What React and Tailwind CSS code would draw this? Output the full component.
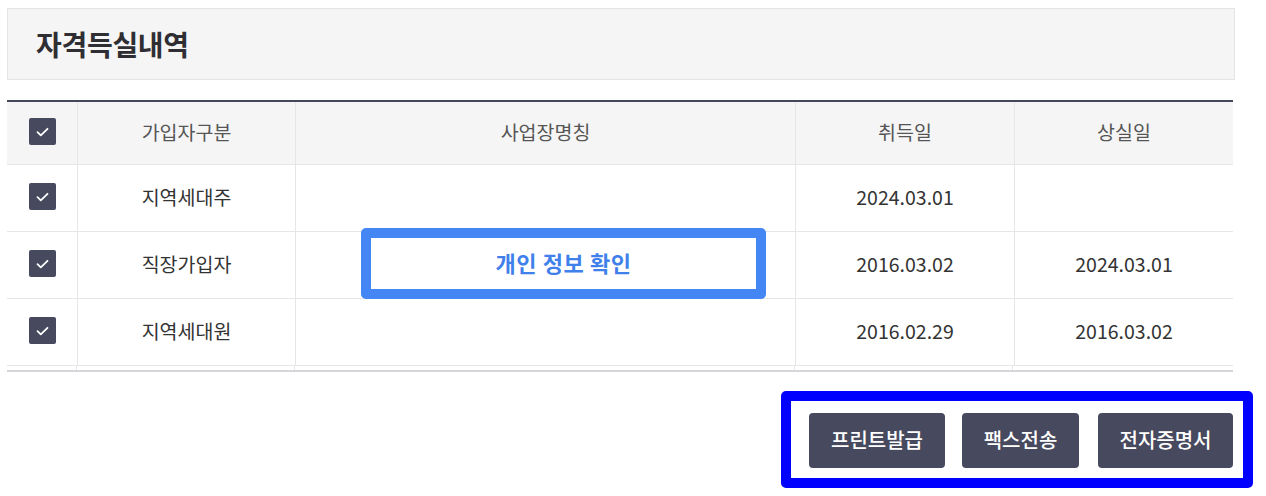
const font = { fontFamily: '"Noto Sans CJK KR", "Noto Sans", sans-serif' }

const cols = 'grid grid-cols-[71px_218px_500px_219px_218px]'

const rows = [
  { type: '지역세대주', name: '', start: '2024.03.01', end: '' },
  { type: '직장가입자', name: '', start: '2016.03.02', end: '2024.03.01' },
  { type: '지역세대원', name: '', start: '2016.02.29', end: '2016.03.02' },
]

function Check() {
  return (
    <span className="flex h-[27px] w-[27px] items-center justify-center rounded-[2px] bg-[#474a5e]">
      <svg width="13" height="10" viewBox="0 0 13 10" fill="none">
        <path d="M1.5 5.2 4.8 8.3 11.5 1.8" stroke="#fff" strokeWidth="1.8" strokeLinecap="round" strokeLinejoin="round" />
      </svg>
    </span>
  )
}

function Cell({ children, last }) {
  return (
    <div className={`flex items-center justify-center pb-[3px] ${last ? '' : 'border-r border-[#e6e6e6]'}`}>
      {children}
    </div>
  )
}

export default function App() {
  return (
    <div className="h-[496px] w-[1266px] bg-white pl-[7px] pt-[8px]" style={font}>
      {/* title */}
      <div className="flex h-[72px] w-[1228px] items-center border border-[#e4e4e4] bg-[#f5f5f5] pl-[28px]">
        <h2 className="text-[28px] font-bold tracking-[-0.3px] text-[#2e2e33]">자격득실내역</h2>
      </div>

      {/* table */}
      <div className="relative mt-[20px] w-[1228px]">
        <div className="w-[1226px] border-t-2 border-[#45475a]">
          <div className={`${cols} h-[63px] border-b border-[#e6e6e6] bg-[#f5f5f5] text-[19.5px] text-[#555]`}>
            <Cell><Check /></Cell>
            <Cell>가입자구분</Cell>
            <Cell>사업장명칭</Cell>
            <Cell>취득일</Cell>
            <Cell last>상실일</Cell>
          </div>
          {rows.map((r, i) => (
            <div key={i} className={`${cols} h-[67px] border-b border-[#e6e6e6] text-[19.5px] text-[#333]`}>
              <Cell><Check /></Cell>
              <Cell>{r.type}</Cell>
              <Cell>{r.name}</Cell>
              <Cell>{r.start}</Cell>
              <Cell last>{r.end}</Cell>
            </div>
          ))}
          <div className="grid h-[6px] grid-cols-[70px_218px_500px_218px_220px] border-b-2 border-[#d4d6da]">
            <div className="border-r border-[#e6e6e6]" />
            <div className="border-r border-[#e6e6e6]" />
            <div className="border-r border-[#e6e6e6]" />
            <div className="border-r border-[#e6e6e6]" />
            <div />
          </div>
        </div>

        {/* overlay */}
        <div className="absolute left-[354px] top-[128px] flex h-[71px] w-[405px] items-center justify-center rounded-[5px] border-[10px] border-[#4487f4] bg-white">
          <span className="pb-[2px] text-[22px] font-bold tracking-[0.6px] text-[#3f80ea]">개인 정보 확인</span>
        </div>
      </div>

      {/* actions */}
      <div className="mt-[41px] flex w-[1226px] justify-end">
        <div className="relative flex gap-[17px]">
          <div className="absolute -bottom-[20px] -left-[28px] -right-[20px] -top-[22px] rounded-[5px] border-[10px] border-[#0000ff]" />
          <button className="relative h-[55px] w-[136px] rounded-[4px] bg-[#474a5e] pb-[2px] text-[20px] font-medium text-white">프린트발급</button>
          <button className="relative h-[55px] w-[117px] rounded-[4px] bg-[#474a5e] pb-[2px] text-[20px] font-medium text-white">팩스전송</button>
          <button className="relative ml-[2px] h-[55px] w-[135px] rounded-[4px] bg-[#474a5e] pb-[2px] text-[20px] font-medium text-white">전자증명서</button>
        </div>
      </div>
    </div>
  )
}
